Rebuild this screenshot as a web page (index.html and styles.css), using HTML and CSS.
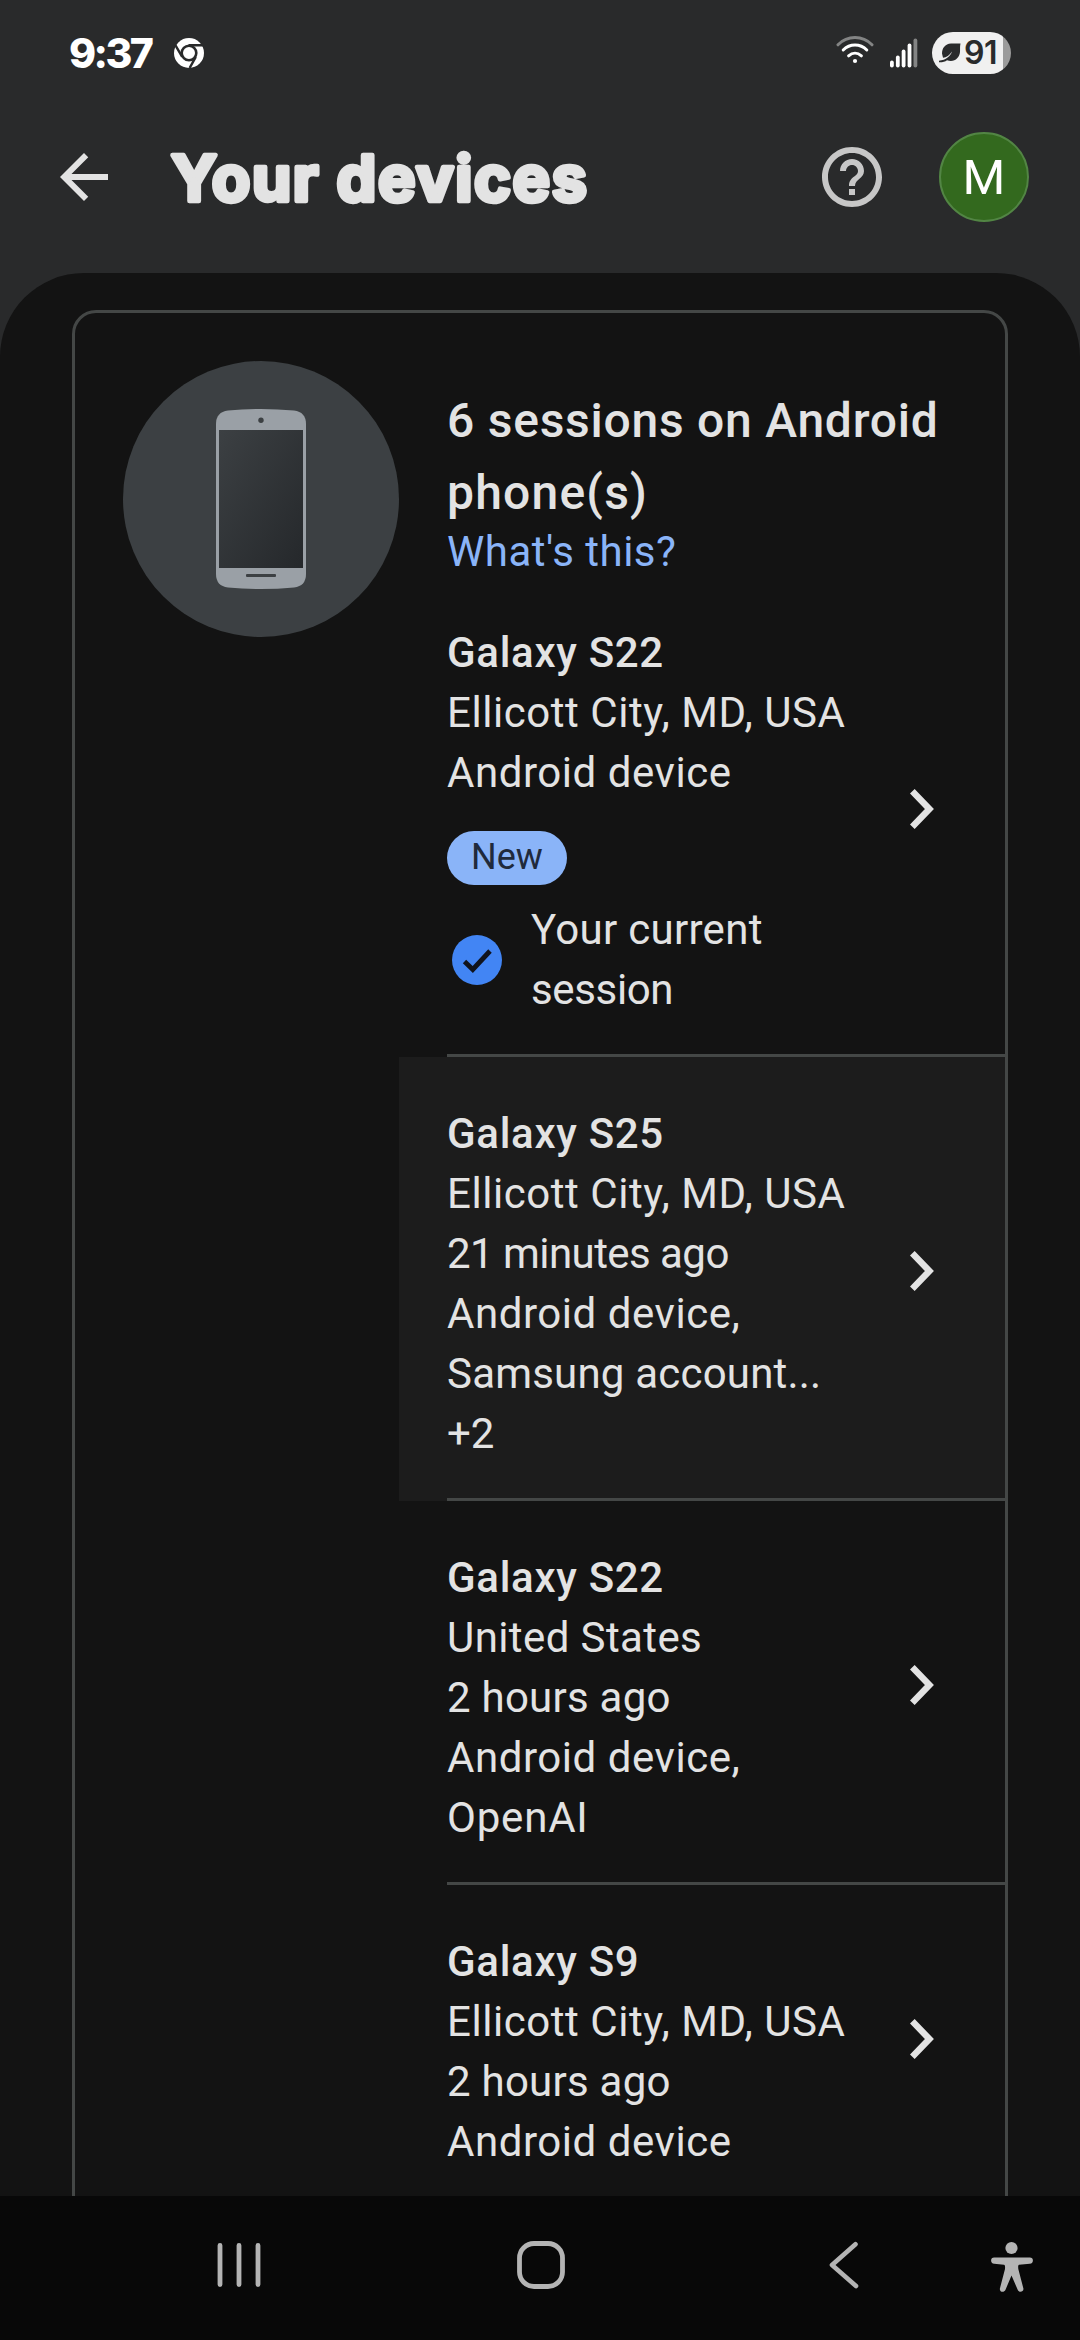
FILE: index.html
```html
<!DOCTYPE html>
<html lang="en">
<head>
<meta charset="utf-8">
<title>Your devices</title>
<link rel="stylesheet" href="styles.css">
</head>
<body>
<div class="screen">
  <div class="status">
    <span class="clock">9:37</span>
    <svg class="chrome" viewBox="0 0 30 30">
      <circle cx="15" cy="15" r="15" fill="#fff"/>
      <circle cx="15" cy="15" r="7.3" fill="none" stroke="#292a2b" stroke-width="2.6"/>
      <path d="M14.6 7.2H29M8.2 18.8L1.2 6.8M21.8 18.8L15.6 30" fill="none" stroke="#292a2b" stroke-width="2.4"/>
    </svg>
    <div class="status-right">
      <svg class="wifi" viewBox="0 0 38 30" fill="none" stroke-linecap="round" stroke-width="3">
        <path d="M2 9.8C11.5.2 26.500.2 36 9.800" stroke="#838484"/>
        <path d="M7.200 15C13.800 8.300 24.200 8.300 30.800 15" stroke="#fff"/>
        <path d="M12.600 20.800C16.500 17.300 21.500 17.300 25.400 20.800" stroke="#fff"/>
        <circle cx="19" cy="26" r="2.100" fill="#fff"/>
      </svg>
      <svg class="signal" viewBox="0 0 28 30">
        <g fill="#fff"><rect x="0" y="22.500" width="3.800" height="7" rx="1.900"/><rect x="5.900" y="17.500" width="3.800" height="12" rx="1.900"/><rect x="11.700" y="11.500" width="3.800" height="18" rx="1.900"/><rect x="17.600" y="5.500" width="3.800" height="24" rx="1.900"/></g>
        <rect x="23.500" y="0.500" width="3.800" height="29" rx="1.900" fill="#838484"/>
      </svg>
      <div class="battery">
        <svg class="leaf" viewBox="0 0 22 20"><path d="M21.500 0.500H12C6 1 3 5 3 10.500L4 14.800C7.500 14.600 10.500 12 13 8.500C11.500 13 7 17 0 17.800V19.300C3 19.500 6 18.800 8 17.300C15 20 20.500 15 21 9C21.200 6 20.800 3.500 21.500 0.500Z" fill="#292a2b"/></svg>
        <span>91</span>
      </div>
    </div>
  </div>

  <header class="appbar">
    <svg class="icon" viewBox="0 0 24 24"><path fill="#e3e3e3" d="M20 11H7.830l5.590-5.590L12 4l-8 8 8 8 1.410-1.410L7.830 13H20v-2z"/></svg>
    <svg class="title" viewBox="0 0 440 90" role="heading"><text x="5" y="66" textLength="416" lengthAdjust="spacing">Your devices</text></svg>
    <svg class="icon help" viewBox="0 0 24 24"><path fill="#c7c7c7" d="M11 18h2v-2h-2v2zm1-16C6.480 2 2 6.480 2 12s4.480 10 10 10 10-4.480 10-10S17.520 2 12 2zm0 18c-4.410 0-8-3.590-8-8s3.590-8 8-8 8 3.590 8 8-3.590 8-8 8zm0-14c-2.210 0-4 1.790-4 4h2c0-1.100.9-2 2-2s2 .9 2 2c0 2-3 1.750-3 5h2c0-2.250 3-2.500 3-5 0-2.210-1.790-4-4-4z"/></svg>
    <div class="avatar">M</div>
  </header>

  <main class="sheet">
    <section class="card">
      <div class="device">
        <svg viewBox="0 0 276 276">
          <defs><linearGradient id="glass" x1="0" y1="0" x2="1" y2="1"><stop offset="0" stop-color="#3c4043"/><stop offset="1" stop-color="#25282b"/></linearGradient></defs>
          <circle cx="138" cy="138" r="138" fill="#3c4043"/>
          <path d="M105 49.500Q138 46.500 171 49.500Q183 51 183 63V213Q183 225 171 226.500Q138 229.500 105 226.500Q93 225 93 213V63Q93 51 105 49.500Z" fill="#9aa0a6"/>
          <rect x="96" y="69" width="84" height="138" fill="url(#glass)"/>
          <circle cx="138" cy="59.300" r="2.700" fill="#3c4043"/>
          <rect x="123" y="213" width="30" height="3" rx="1" fill="#3c4043"/>
        </svg>
      </div>
      <div class="sessions">
        <div class="intro">
          <h2><span class="h-a">6 sessions on Android</span><span class="h-b">phone(s)</span></h2>
          <a class="link">What's this?</a>
        </div>

        <div class="row"><div class="row-in">
          <div class="info">
            <p class="name">Galaxy S22</p><p class="city">Ellicott City, MD, USA</p><p class="dev">Android device</p>
            <span class="pill">New</span>
            <div class="current">
              <svg viewBox="0 0 60 60"><circle cx="30" cy="30" r="25" fill="#4285f4"/><path d="M17.500 31.500L25.800 39.500L43 21" fill="none" stroke="#10131c" stroke-width="4.800"/></svg>
              <div><p class="cur-a">Your current</p><p class="cur-b">session</p></div>
            </div>
          </div>
          <svg class="chev" viewBox="0 0 24 40"><path d="M2.300 2.300L19.400 20L2.300 37.700"/></svg>
        </div></div>

        <div class="row active"><div class="row-in">
          <div class="info">
            <p class="name">Galaxy S25</p><p class="city">Ellicott City, MD, USA</p><p class="mins">21 minutes ago</p><p class="dev">Android device,</p><p class="sam">Samsung account...</p><p class="plus">+2</p>
          </div>
          <svg class="chev" viewBox="0 0 24 40"><path d="M2.300 2.300L19.400 20L2.300 37.700"/></svg>
        </div></div>

        <div class="row"><div class="row-in">
          <div class="info">
            <p class="name">Galaxy S22</p><p class="us">United States</p><p class="hours">2 hours ago</p><p class="dev">Android device,</p><p class="oai">OpenAI</p>
          </div>
          <svg class="chev" viewBox="0 0 24 40"><path d="M2.300 2.300L19.400 20L2.300 37.700"/></svg>
        </div></div>

        <div class="row"><div class="row-in last">
          <div class="info">
            <p class="name">Galaxy S9</p><p class="city">Ellicott City, MD, USA</p><p class="hours">2 hours ago</p><p class="dev">Android device</p>
          </div>
          <svg class="chev" viewBox="0 0 24 40"><path d="M2.300 2.300L19.400 20L2.300 37.700"/></svg>
        </div></div>
      </div>
    </section>
  </main>

  <nav class="navbar">
    <svg class="n-recents" viewBox="0 0 44 48" stroke="#b4b4b4" stroke-width="4.800" stroke-linecap="round"><path d="M3 4.400V43.600M22 4.400V43.600M41 4.400V43.600"/></svg>
    <svg class="n-home" viewBox="0 0 48 48"><rect x="2.500" y="2.500" width="43" height="43" rx="14.500" fill="none" stroke="#b4b4b4" stroke-width="4.800"/></svg>
    <svg class="n-back" viewBox="0 0 30 48"><path d="M26.500 3.200L3 24L27 45" fill="none" stroke="#b4b4b4" stroke-width="4.600" stroke-linecap="round" stroke-linejoin="round"/></svg>
    <svg class="n-acc" viewBox="0 0 42 52" fill="#b4b4b4"><circle cx="20.500" cy="7" r="6.100"/><path d="M3.200 16.500H38.800a3.100 3.100 0 0 1 0 6.200L28 23.700C27.200 24 27 25 27.300 28L32.400 47.500C33 51 28 52 26.800 49L20.500 34.500L14.400 49C13 52 8.200 51 8.900 47.500L14 28C14.200 25 14 24 13 23.700L3.200 22.700a3.100 3.100 0 0 1 0-6.200Z"/></svg>
  </nav>
</div>
</body>
</html>
```
FILE: styles.css
```css
* { box-sizing: border-box; }
body, p, h2 { margin: 0; }
body {
  background: #292a2b;
  color: #e3e3e3;
  font-family: Roboto, "Liberation Sans", sans-serif;
}
svg { display: block; flex: none; }
.screen {
  width: 1080px;
  height: 2340px;
  display: flex;
  flex-direction: column;
  overflow: hidden;
}

/* Status bar */
.status {
  height: 106px;
  flex: none;
  display: flex;
  align-items: center;
  padding: 0 69px;
}
.clock {
  width: 105px;
  color: #fff;
  font: 800 41px/48px Inter, Roboto, sans-serif;
  letter-spacing: -2.600px;
}
.chrome { width: 30px; height: 30px; }
.status-right {
  margin-left: auto;
  display: flex;
  align-items: center;
}
.wifi { width: 38px; height: 30px; margin: -6px 16px 0 0; }
.signal { width: 28px; height: 30px; margin-right: 14px; }
.battery {
  width: 79px;
  height: 42px;
  border-radius: 21px;
  display: flex;
  align-items: center;
  padding-left: 7px;
  background: linear-gradient(90deg, #f0f0f0 71px, #9b9b9b 71px);
}
.leaf { width: 22px; height: 20px; margin-right: 3px; }
.battery span {
  color: #292a2b;
  font: 600 32px/42px Inter, Roboto, sans-serif;
  letter-spacing: -.5px;
}

/* App bar */
.appbar {
  height: 167px;
  flex: none;
  display: flex;
  align-items: flex-start;
  padding: 26px 51px 0 48px;
}
.icon { width: 72px; height: 72px; margin-top: 9px; }
.title { width: 440px; height: 90px; margin: 3px 0 0 46px; }
.title text {
  font: 700 63px Inter, Roboto, sans-serif;
  fill: #e3e3e3;
  stroke: #e3e3e3;
  stroke-width: 4.500px;
  stroke-linejoin: round;
}
.help { margin-left: auto; margin-right: 51px; }
.avatar {
  width: 90px;
  height: 90px;
  border-radius: 50%;
  border: 2px solid #528544;
  background: #33691e;
  color: #fff;
  font-size: 49px;
  font-weight: 450;
  line-height: 88px;
  text-align: center;
}

/* Sheet */
.sheet {
  flex: 1;
  min-height: 0;
  overflow: hidden;
  background: #131313;
  border-radius: 84px 84px 0 0;
  padding: 37px 72px 0;
}
.card {
  height: 2000px;
  border: 3px solid #444746;
  border-radius: 24px;
  display: flex;
}
.device { width: 324px; flex: none; padding: 48px 0 0 48px; }
.device svg { width: 276px; height: 276px; }
.sessions { flex: 1; }
.intro { height: 263px; padding: 72px 0 0 48px; }
h2 { font-size: 48px; line-height: 72px; font-weight: 500; }
h2 span { display: block; }
.link { display: block; color: #8ab4f8; font-size: 42px; line-height: 45px; letter-spacing: .5px; }

.row { padding-left: 48px; }
.row.active { background: #1c1c1c; }
.row-in {
  border-bottom: 3px solid #444746;
  padding: 47px 71px 34px 0;
  display: flex;
  align-items: center;
  justify-content: space-between;
}
.row-in.last { border-bottom: 0; }
.info p { font-size: 42px; line-height: 60px; white-space: nowrap; }
.chev {
  width: 24px;
  height: 40px;
  margin-bottom: 26px;
  fill: none;
  stroke: #e3e3e3;
  stroke-width: 6.500px;
}
.pill {
  display: block;
  width: 120px;
  height: 54px;
  margin: 28px 0 15px;
  border-radius: 27px;
  background: #8ab4f8;
  color: #202a3c;
  font-size: 36px;
  line-height: 52px;
  text-align: center;
}
.current { display: flex; align-items: center; }
.current svg { width: 60px; height: 60px; margin-right: 24px; }

/* Tracking per line of text */
.h-a { letter-spacing: .75px; }
.h-b { letter-spacing: 1.200px; }
.info .name { font-weight: 500; letter-spacing: .7px; }
.info .city { letter-spacing: .55px; }
.info .dev { letter-spacing: .55px; }
.info .us { letter-spacing: .4px; }
.info .hours { letter-spacing: .25px; }
.info .oai { letter-spacing: .8px; }
.info .mins { letter-spacing: -.55px; }
.info .sam { letter-spacing: .2px; }
.cur-a { letter-spacing: .3px; }
.cur-b { letter-spacing: -.35px; }

/* System navigation */
.navbar {
  height: 144px;
  flex: none;
  display: flex;
  align-items: flex-start;
  background: #080808;
  padding: 45px 46px 0 217px;
}
.n-recents { width: 44px; height: 48px; }
.n-home { width: 48px; height: 48px; margin-left: 256px; }
.n-back { width: 30px; height: 48px; margin-left: 264px; }
.n-acc { width: 42px; height: 52px; margin-left: auto; margin-right: 1px; }
```
